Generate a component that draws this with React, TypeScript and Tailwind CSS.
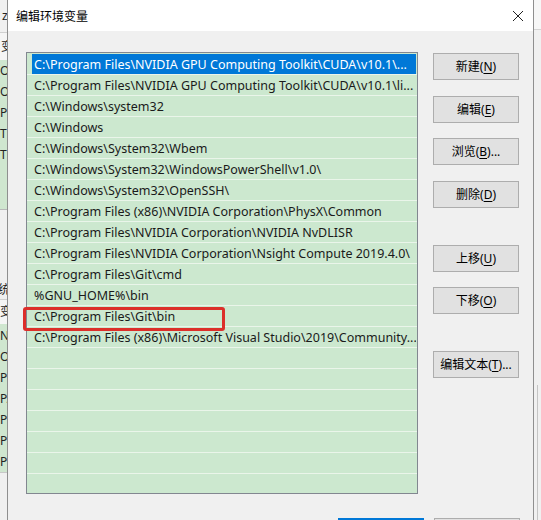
import React from "react";

const rows: string[] = [
  "C:\\Program Files\\NVIDIA GPU Computing Toolkit\\CUDA\\v10.1\\...",
  "C:\\Program Files\\NVIDIA GPU Computing Toolkit\\CUDA\\v10.1\\li...",
  "C:\\Windows\\system32",
  "C:\\Windows",
  "C:\\Windows\\System32\\Wbem",
  "C:\\Windows\\System32\\WindowsPowerShell\\v1.0\\",
  "C:\\Windows\\System32\\OpenSSH\\",
  "C:\\Program Files (x86)\\NVIDIA Corporation\\PhysX\\Common",
  "C:\\Program Files\\NVIDIA Corporation\\NVIDIA NvDLISR",
  "C:\\Program Files\\NVIDIA Corporation\\Nsight Compute 2019.4.0\\",
  "C:\\Program Files\\Git\\cmd",
  "%GNU_HOME%\\bin",
  "C:\\Program Files\\Git\\bin",
  "C:\\Program Files (x86)\\Microsoft Visual Studio\\2019\\Community...",
  "",
  "",
  "",
  "",
  "",
  "",
  "",
];

function Btn({ label, k, suffix = "", className = "" }: { label: string; k: string; suffix?: string; className?: string }) {
  return (
    <div
      className={
        "w-[86px] h-[27px] border border-[#adadad] bg-[#e1e1e1] flex items-center justify-center text-[12px] text-black leading-none " +
        className
      }
    >
      <span>
        {label}(<span className="underline underline-offset-2">{k}</span>){suffix}
      </span>
    </div>
  );
}

function LeftStrip() {
  const upper = ["O", "O", "Pa", "TE", "TM", "", ""];
  const lower = ["N", "O", "Pa", "PA", "PR", "PR", "PR"];
  return (
    <div className="w-[7px] h-full overflow-hidden flex flex-col text-[12px] text-[#222] whitespace-nowrap">
      <div className="h-[33px] bg-[#f0f0f0] border-b border-[#d0d0d0] flex items-center pl-[2px]">z</div>
      <div className="h-[27px] bg-[#f5f5f5] flex items-center pl-[1px]">变</div>
      <div className="flex flex-col bg-[#cfe6cf]">
        {upper.map((t, i) => (
          <div key={i} className="h-[21px] flex items-center">
            {t}
          </div>
        ))}
      </div>
      <div className="h-[3px] bg-[#cfe6cf] border-b border-[#b8b8b8]" />
      <div className="h-[90px] bg-[#f0f0f0] flex flex-col justify-end">
        <div className="h-[20px] flex items-center -ml-[2px] border-b border-[#d0d0d0]">统</div>
      </div>
      <div className="h-[24px] bg-[#f5f5f5] flex items-center">变</div>
      <div className="flex flex-col bg-[#cfe6cf] pt-[1px]">
        {lower.map((t, i) => (
          <div key={i} className="h-[21px] flex items-center">
            {t}
          </div>
        ))}
      </div>
      <div className="flex-1 bg-[#f0f0f0] border-t border-[#c8c8c8]" />
    </div>
  );
}

function RightStrip() {
  return (
    <div className="w-[7px] h-full flex flex-col">
      <div className="h-[32px] bg-[#f7f7f7] border-b border-[#d4d4d4]" />
      <div className="flex-1 bg-[#f0f0f0] flex">
        <div className="w-[3px]" />
        <div className="mt-[355px] h-[135px] w-[1px] bg-[#c4c4c4]" />
      </div>
    </div>
  );
}

export default function App() {
  return (
    <div className="w-[541px] h-[520px] overflow-hidden flex bg-[#f0f0f0] font-['Noto_Sans','Noto_Sans_CJK_SC',sans-serif]">
      <LeftStrip />
      <div className="w-[527px] h-full flex flex-col border-x border-[#8f8f8f] bg-[#f0f0f0]">
        {/* title bar */}
        <div className="h-[31px] bg-white flex items-center justify-between pl-[8px] pr-[8px] shrink-0">
          <span className="text-[12px] text-black font-['Noto_Sans_CJK_SC',sans-serif]">编辑环境变量</span>
          <svg width="12" height="12" viewBox="0 0 12 12" className="mr-[1px]">
            <path d="M1 1 L11 11 M11 1 L1 11" stroke="#222" strokeWidth="1" fill="none" />
          </svg>
        </div>
        {/* body */}
        <div className="flex pt-[21px] pl-[18px] shrink-0">
          <div className="relative w-[392px] h-[442px] border border-[#828790] bg-[#cce8cf]">
            <div className="w-full h-full pt-[1px] overflow-hidden">
              {rows.map((t, i) => (
                <div key={i} className="h-[21px] flex flex-col">
                  <div className="h-[20px] flex pl-[5px] pr-[1px]">
                    <div
                      className={
                        "flex-1 flex items-center pl-[2px] pt-[2px] text-[12.5px] whitespace-nowrap overflow-hidden " +
                        (i === 0 ? "bg-[#0078d7] text-white" : "text-[#1a1a1a]")
                      }
                    >
                      {t}
                    </div>
                  </div>
                  <div className="h-[1px] bg-[#eaf5ea]" />
                </div>
              ))}
            </div>
            <div className="absolute left-[-4px] top-[254px] w-[202px] h-[24px] border-[3px] border-[#dc2f2a] rounded-[3px]" />
          </div>
          <div className="ml-[15px] flex flex-col">
            <Btn label="新建" k="N" className="mt-[1px]" />
            <Btn label="编辑" k="E" className="mt-[16px]" />
            <Btn label="浏览" k="B" suffix="..." className="mt-[15px]" />
            <Btn label="删除" k="D" className="mt-[16px]" />
            <Btn label="上移" k="U" className="mt-[37px]" />
            <Btn label="下移" k="O" className="mt-[15px]" />
            <Btn label="编辑文本" k="T" suffix="..." className="mt-[37px]" />
          </div>
        </div>
        {/* bottom buttons */}
        <div className="flex justify-end gap-[10px] pr-[13px] mt-[24px] shrink-0">
          <div className="w-[86px] h-[27px] border-[2px] border-[#0078d7] bg-[#e5f1fb]" />
          <div className="w-[86px] h-[27px] border border-[#adadad] bg-[#e1e1e1]" />
        </div>
      </div>
      <RightStrip />
    </div>
  );
}
